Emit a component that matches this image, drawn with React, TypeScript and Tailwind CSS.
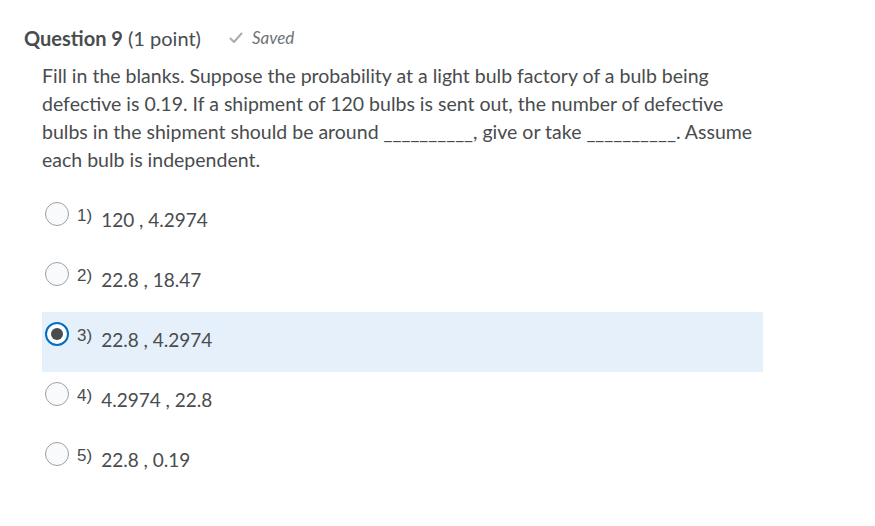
const options = [
  { n: "1)", text: "120 , 4.2974", checked: false },
  { n: "2)", text: "22.8 , 18.47", checked: false },
  { n: "3)", text: "22.8 , 4.2974", checked: true },
  { n: "4)", text: "4.2974 , 22.8", checked: false },
  { n: "5)", text: "22.8 , 0.19", checked: false },
];

function Radio({ checked }: { checked: boolean }) {
  return checked ? (
    <span className="flex h-[24px] w-[24px] shrink-0 items-center justify-center rounded-full border-[2px] border-[#006fbf] bg-white">
      <span className="h-[12px] w-[12px] rounded-full bg-[#494c4e]" />
    </span>
  ) : (
    <span className="h-[24px] w-[24px] shrink-0 rounded-full border border-[#9ea0a3] bg-[#f9fafc]" />
  );
}

export default function App() {
  return (
    <div className="min-h-[526px] w-[875px] bg-white font-['Lato','Open_Sans',sans-serif] text-[#494c4e]">
      <div className="px-[24px] pt-[25px]">
        {/* Header */}
        <div className="flex items-center gap-[28px]">
          <h2 className="text-[20px] leading-[26px]">
            <span className="font-bold">Question 9</span> (1 point)
          </h2>
          <span className="flex items-center gap-[9px] text-[17px] italic text-[#6e7376]">
            <svg width="14" height="12" viewBox="0 0 14 12" fill="none">
              <path d="M1.5 6.5 L5 10 L12.5 1.5" stroke="#a9acaf" strokeWidth="2" strokeLinecap="round" strokeLinejoin="round" />
            </svg>
            Saved
          </span>
        </div>

        {/* Body */}
        <p className="mt-[11px] ml-[18px] w-[720px] text-[19.5px] leading-[28px]">
          Fill in the blanks. Suppose the probability at a light bulb factory of a bulb being
          defective is 0.19. If a shipment of 120 bulbs is sent out, the number of defective
          bulbs in the shipment should be around __________, give or take __________. Assume
          each bulb is independent.
        </p>

        {/* Options */}
        <ul className="mt-[18px] ml-[18px] w-[721px]">
          {options.map((o) => (
            <li
              key={o.n}
              className={`flex h-[60px] items-start pl-[3px] pt-[10px] ${o.checked ? "bg-[#e6f0fb]" : ""}`}
            >
              <Radio checked={o.checked} />
              <span className="ml-[8px] mt-[4px] font-['Liberation_Sans',sans-serif] text-[17px] leading-[20px]">
                {o.n}
              </span>
              <span className="ml-[9px] mt-[6px] text-[19px] leading-[24px]">{o.text}</span>
            </li>
          ))}
        </ul>
      </div>
    </div>
  );
}
